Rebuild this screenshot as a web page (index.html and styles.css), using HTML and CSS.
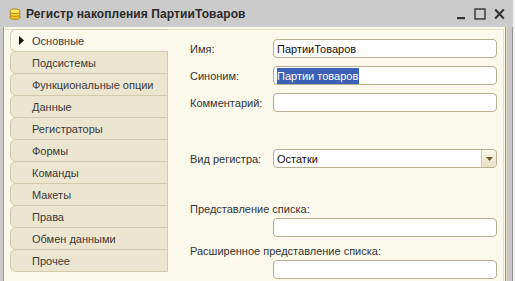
FILE: index.html
```html
<!DOCTYPE html>
<html lang="ru">
<head>
<meta charset="utf-8">
<title>Регистр накопления ПартииТоваров</title>
<link rel="stylesheet" href="styles.css">
</head>
<body>
<div class="window">
  <div class="titlebar">
    <svg class="app-icon" width="12" height="12" viewBox="0 0 12 12">
      <ellipse cx="6" cy="9" rx="5" ry="2.3" fill="#f2c417" stroke="#b07a0a" stroke-width="0.9"/>
      <ellipse cx="6" cy="6" rx="5" ry="2.3" fill="#f7d637" stroke="#b07a0a" stroke-width="0.9"/>
      <ellipse cx="6" cy="3.2" rx="5" ry="2.3" fill="#fde86a" stroke="#b07a0a" stroke-width="0.9"/>
    </svg>
    <span class="title">Регистр накопления ПартииТоваров</span>
    <div class="controls">
      <svg width="10" height="12" viewBox="0 0 10 12"><rect x="1" y="9" width="8" height="2.2" fill="#333"/></svg>
      <svg width="12" height="12" viewBox="0 0 12 12"><rect x="1" y="1" width="10" height="10" fill="none" stroke="#333" stroke-width="1.4"/></svg>
      <svg width="11" height="12" viewBox="0 0 11 12"><path d="M1.2 1.5 L9.8 10.5 M9.8 1.5 L1.2 10.5" stroke="#333" stroke-width="2.1"/></svg>
    </div>
  </div>
  <div class="frame">
    <div class="panel">
      <div class="tabs">
        <div class="tab tab-active">
          <svg class="marker" width="5" height="9" viewBox="0 0 5 9"><polygon points="0,0 5,4.5 0,9" fill="#111"/></svg>
          <span>Основные</span>
        </div>
        <div class="tab"><span>Подсистемы</span></div>
        <div class="tab"><span>Функциональные опции</span></div>
        <div class="tab"><span>Данные</span></div>
        <div class="tab"><span>Регистраторы</span></div>
        <div class="tab"><span>Формы</span></div>
        <div class="tab"><span>Команды</span></div>
        <div class="tab"><span>Макеты</span></div>
        <div class="tab"><span>Права</span></div>
        <div class="tab"><span>Обмен данными</span></div>
        <div class="tab"><span>Прочее</span></div>
      </div>
      <div class="form">
        <div class="row row-first">
          <span class="label">Имя:</span>
          <div class="field">ПартииТоваров</div>
        </div>
        <div class="row">
          <span class="label">Синоним:</span>
          <div class="field"><span class="selected">Партии товаров</span></div>
        </div>
        <div class="row">
          <span class="label">Комментарий:</span>
          <div class="field"></div>
        </div>
        <div class="row row-kind">
          <span class="label">Вид регистра:</span>
          <div class="field field-select">
            <span class="value">Остатки</span>
            <span class="drop">
              <svg width="7" height="4" viewBox="0 0 7 4"><polygon points="0,0 7,0 3.5,4" fill="#6b5b22"/></svg>
            </span>
          </div>
        </div>
        <div class="stack stack-first">
          <span class="label">Представление списка:</span>
          <div class="field field-wide"></div>
        </div>
        <div class="stack">
          <span class="label">Расширенное представление списка:</span>
          <div class="field field-wide"></div>
        </div>
      </div>
    </div>
  </div>
</div>
</body>
</html>
```

FILE: styles.css
```css
* { box-sizing: border-box; }

html, body {
  margin: 0;
  padding: 0;
  background: #f3f3f3;
  width: 515px;
  height: 281px;
  overflow: hidden;
}

body {
  font-family: "Liberation Sans", Arial, sans-serif;
  font-size: 11px;
  color: #333;
}

.window {
  width: 513px;
  height: 281px;
  background: #cbcbcb;
  display: flex;
  flex-direction: column;
  overflow: hidden;
}

.titlebar {
  height: 27px;
  flex: none;
  display: flex;
  align-items: center;
  padding-left: 9px;
}

.app-icon {
  margin-top: 1px;
}

.title {
  margin-left: 5px;
  font-weight: bold;
  font-size: 12px;
  color: #2a2a2a;
  letter-spacing: 0.1px;
}

.controls {
  margin-left: auto;
  margin-right: 8px;
  display: flex;
  align-items: center;
  gap: 8px;
  margin-top: 1px;
}

.frame {
  flex: 1;
  margin-left: 3px;
  border-right: 6px solid #c6c6c6;
  box-shadow: inset -1px 0 0 #e4ddc4;
  background: #fbf9ec;
  display: flex;
  position: relative;
}

.frame::after {
  content: "";
  position: absolute;
  top: 0;
  bottom: 0;
  right: -6px;
  width: 6px;
  border-left: 1px solid #8f8f8f;
  border-right: 1px solid #8f8f8f;
}

.frame::before {
  content: "";
  position: absolute;
  top: 0;
  bottom: 0;
  left: -3px;
  width: 3px;
  border-right: 1px solid #9a9a9a;
}

.panel {
  flex: 1;
  margin: 2px 3px 0 2px;
  border-top: 1px solid #e6dfc5;
  border-right: 1px solid #e6dfc5;
  display: flex;
}

.tabs {
  width: 158px;
  flex: none;
  margin-left: 5px;
  display: flex;
  flex-direction: column;
}

.tab {
  height: 23px;
  margin-top: -1px;
  background: #ece6d0;
  border: 1px solid #d2caad;
  border-radius: 6px 0 0 6px;
  display: flex;
  align-items: center;
  padding-left: 21px;
  color: #3a3a3a;
  white-space: nowrap;
}

.tab-active {
  background: #fbf9ec;
  border-right: none;
  padding-left: 8px;
  box-shadow: inset 1px 1px 0 #fffdf5;
}

.marker {
  margin-right: 8px;
}

.form {
  flex: 1;
  display: flex;
  flex-direction: column;
  padding-left: 22px;
  padding-right: 5px;
}

.row {
  display: flex;
  align-items: center;
  height: 19px;
  margin-top: 8px;
}

.row-first { margin-top: 9px; }
.row-kind { margin-top: 37px; }

.label {
  width: 83px;
  flex: none;
  white-space: nowrap;
  color: #333;
}

.field {
  width: 224px;
  height: 19px;
  background: #fff;
  border: 1px solid #b7af94;
  border-radius: 4px;
  padding-left: 3px;
  display: flex;
  align-items: center;
  color: #111;
  font-size: 11px;
  white-space: nowrap;
  overflow: hidden;
}

.selected {
  background: #3d5fb6;
  color: #fff;
  line-height: 16px;
  padding: 0 1px 0 0;
}

.field-select {
  padding-right: 0;
}

.field-select .value {
  flex: 1;
}

.drop {
  width: 15px;
  height: 100%;
  flex: none;
  border-left: 1px solid #d2caae;
  background: linear-gradient(#faf6e6, #e8e0c6);
  display: flex;
  align-items: center;
  justify-content: center;
  border-radius: 0 3px 3px 0;
}

.stack {
  display: flex;
  flex-direction: column;
  margin-top: 7px;
}

.stack-first { margin-top: 34px; }

.stack .label {
  width: auto;
  height: 15px;
  line-height: 15px;
  margin-left: 0;
}

.field-wide {
  margin-left: 83px;
  margin-top: 1px;
}
```
